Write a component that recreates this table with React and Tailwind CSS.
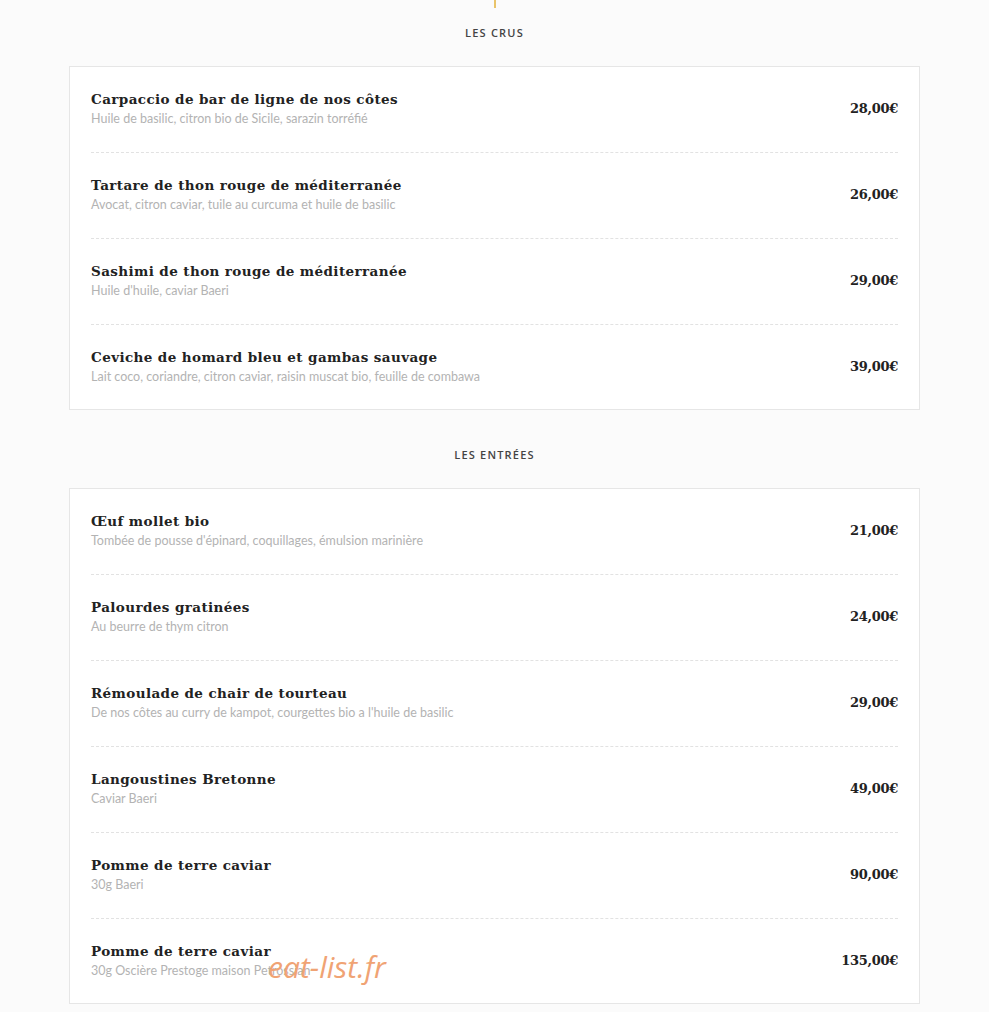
import React from "react";

const sections = [
    {
        title: "Les crus",
        items: [
            { name: "Carpaccio de bar de ligne de nos côtes", desc: "Huile de basilic, citron bio de Sicile, sarazin torréfié", price: "28,00€" },
            { name: "Tartare de thon rouge de méditerranée", desc: "Avocat, citron caviar, tuile au curcuma et huile de basilic", price: "26,00€" },
            { name: "Sashimi de thon rouge de méditerranée", desc: "Huile d'huile, caviar Baeri", price: "29,00€" },
            { name: "Ceviche de homard bleu et gambas sauvage", desc: "Lait coco, coriandre, citron caviar, raisin muscat bio, feuille de combawa", price: "39,00€" },
        ],
    },
    {
        title: "Les entrées",
        items: [
            { name: "Œuf mollet bio", desc: "Tombée de pousse d'épinard, coquillages, émulsion marinière", price: "21,00€" },
            { name: "Palourdes gratinées", desc: "Au beurre de thym citron", price: "24,00€" },
            { name: "Rémoulade de chair de tourteau", desc: "De nos côtes au curry de kampot, courgettes bio a l'huile de basilic", price: "29,00€" },
            { name: "Langoustines Bretonne", desc: "Caviar Baeri", price: "49,00€" },
            { name: "Pomme de terre caviar", desc: "30g Baeri", price: "90,00€" },
            { name: "Pomme de terre caviar", desc: "30g Oscière Prestoge maison Petrossian", price: "135,00€" },
        ],
    },
];

const MenuRow = ({ item, last }) => (
    <div className={`flex items-center justify-between pt-[22px] ${last ? "pb-[22px]" : "pb-[23px] border-b border-dashed border-[#e2e2e2]"}`}>
        <div>
            <div className="font-['DejaVu_Serif',serif] font-bold text-[13.5px] leading-[20px] tracking-[0.4px] text-[#222]">
                {item.name}
            </div>
            <div className="font-['Lato',sans-serif] text-[12.5px] leading-[20px] text-[#b3b3b3]">
                {item.desc}
            </div>
        </div>
        <div className="font-['DejaVu_Serif',serif] font-bold text-[13px] tracking-[-0.3px] text-[#222]">
            {item.price}
        </div>
    </div>
);

const App = () => {
    return (
        <div className="relative min-h-[1012px] bg-[#fbfbfb] pb-4">
            <div className="mx-auto w-[2px] h-[8px] bg-[#e9c46a]"></div>
            {sections.map((section, i) => (
                <div key={section.title} className={i === 0 ? "pt-[18px]" : "pt-[38px]"}>
                    <h2 className="text-center font-['Open_Sans',sans-serif] font-semibold text-[11px] leading-[14px] uppercase tracking-[1.2px] text-[#444]">
                        {section.title}
                    </h2>
                    <div className="mx-auto mt-[26px] w-[851px] bg-white border border-[#e6e6e6] px-[21px]">
                        {section.items.map((item, j) => (
                            <MenuRow key={j} item={item} last={j === section.items.length - 1} />
                        ))}
                    </div>
                </div>
            ))}
            <div className="absolute left-[268px] top-[947px] font-['Open_Sans',sans-serif] italic text-[30px] leading-[40px] text-[#f0a374]">
                eat-list.fr
            </div>
        </div>
    );
};

export default App;
